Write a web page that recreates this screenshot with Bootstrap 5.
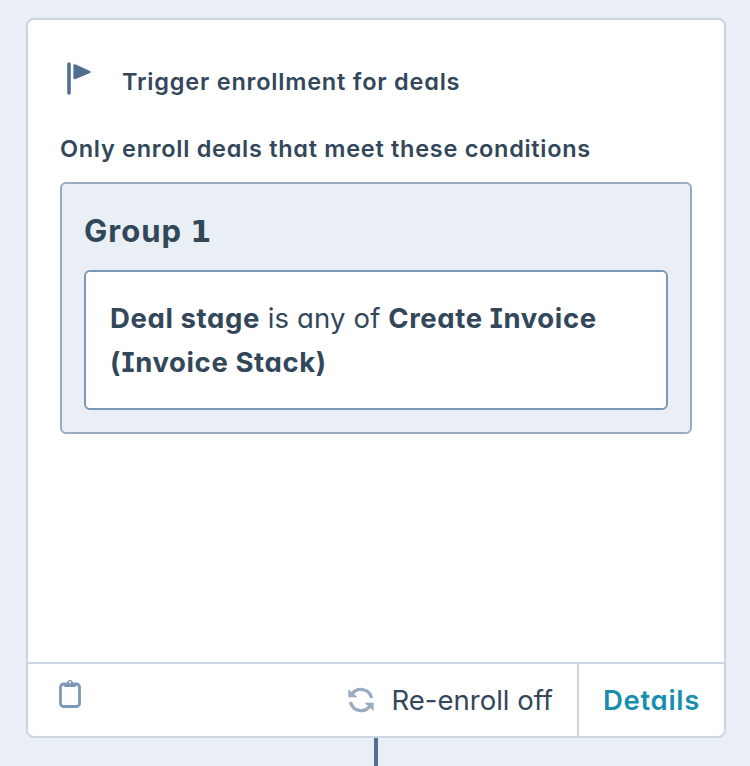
<!DOCTYPE html>
<html lang="en">
<head>
<meta charset="utf-8">
<meta name="viewport" content="width=device-width, initial-scale=1">
<title>Workflow trigger</title>
<link href="https://cdn.jsdelivr.net/npm/bootstrap@5.3.0/dist/css/bootstrap.min.css" rel="stylesheet">
<style>
body{background:#eaeff6;color:#33475b;font-family:Inter,Lato,"Liberation Sans",sans-serif;font-feature-settings:"cv11","cv08";height:766px;overflow:hidden}
.trigger-card{width:700px;height:720px;margin:18px 0 0 26px;border:2px solid #cbd6e2;border-radius:8px}
.trigger-main{height:642px;padding:32px}
.trigger-head{height:60px;padding-left:6px;gap:30px}
.flag-icon{margin-top:10px}
.t-title{font-size:23.5px;line-height:60px;font-weight:640;letter-spacing:.79px}
.t-sub{font-size:23.5px;line-height:36px;padding-top:19px;margin-bottom:15px;font-weight:640;letter-spacing:.71px}
.group-box{height:252px;background:#eaeff6;border:2px solid #99acc2;border-radius:6px;padding:20px 22px 22px}
.g-title{font-size:31px;line-height:54px;height:54px;margin-bottom:12px;font-weight:650;letter-spacing:1px}
.g-num{font-family:"DejaVu Sans",sans-serif;font-weight:700;font-size:30px}
.rule-box{height:140px;border:2px solid #7c98b6;border-radius:6px;padding:24px;font-size:27.5px;line-height:44px}
.rule-box b{font-weight:660;letter-spacing:.61px}
.rule-box .light{letter-spacing:.15px}
.trigger-foot{height:74px;border-top:2px solid #cbd6e2;font-size:27.5px}
.foot-clip{margin:15px 0 0 30px}
.reenroll{padding-right:24px;gap:18px}
.reenroll span,.details span{padding-top:2px}
.reenroll .light{letter-spacing:0}
.details{width:147px;border-left:2px solid #cbd6e2;color:#178fac;font-weight:640;letter-spacing:.7px;text-decoration:none}
.details:hover{color:#178fac}
.stem{width:4px;height:28px;margin-left:374px;background:#516f90}
.light{font-weight:400}
</style>
<script src="https://cdn.jsdelivr.net/npm/bootstrap@5.3.0/dist/js/bootstrap.bundle.min.js"></script>
</head>
<body>
<section class="trigger-card bg-white d-flex flex-column">
  <div class="trigger-main flex-shrink-0">
    <div class="trigger-head d-flex">
      <svg class="flag-icon" width="26" height="34" viewBox="0 0 26 34"><path d="M3 2V31" stroke="#516f90" stroke-width="3.600" stroke-linecap="round"/><path d="M7.400 3.500Q7.400 1.900 9.200 2.300L24 9Q25.600 10 24 11L9.200 17.200Q7.400 17.700 7.400 16Z" fill="#516f90"/></svg>
      <div class="t-title text-nowrap"><span>Trigger enrollment for deals</span></div>
    </div>
    <div class="t-sub text-nowrap"><span>Only enroll deals that meet these conditions</span></div>
    <div class="group-box">
      <div class="g-title"><span>Group <span class="g-num">1</span></span></div>
      <div class="rule-box bg-white text-nowrap"><b>Deal stage</b> <span class="light">is any of</span> <b>Create Invoice</b><br><b>(Invoice Stack)</b></div>
    </div>
  </div>
  <div class="trigger-foot flex-shrink-0 d-flex">
    <svg class="foot-clip" width="24" height="30" viewBox="0 0 24 30"><rect x="2.500" y="5" width="19" height="22.500" rx="3" fill="none" stroke="#7c98b6" stroke-width="2.800"/><path d="M5.500 4H9Q9.500 1 12 1T15 4H18.500V6Q18.500 8 16.500 8H7.500Q5.500 8 5.500 6Z" fill="#7c98b6"/><circle cx="12" cy="3.300" r="1.100" fill="#fff"/></svg>
    <div class="reenroll ms-auto d-flex align-items-center"><svg width="26" height="26" viewBox="0 0 26 26"><g id="arc"><path d="M3.800 7.500A10.800 10.800 0 0 1 23.500 11" fill="none" stroke="#99acc2" stroke-width="3.400"/><path d="M.4 2V10.200H8.800V9L5.800 7.300Z" fill="#99acc2"/></g><use href="#arc" transform="rotate(180 13 13)"/></svg><span class="light">Re-enroll off</span></div>
    <a href="#" class="details d-flex align-items-center justify-content-center"><span>Details</span></a>
  </div>
</section>
<div class="stem"></div>
</body>
</html>
